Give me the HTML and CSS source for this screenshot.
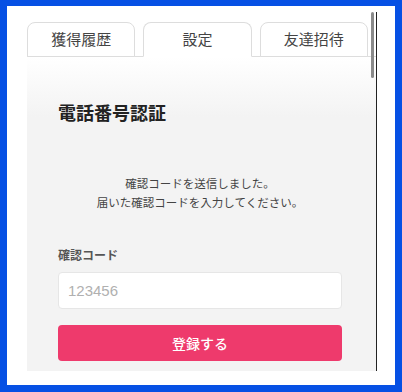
FILE: index.html
```html
<!DOCTYPE html>
<html lang="ja">
<head>
<meta charset="utf-8">
<link rel="stylesheet" href="styles.css">
</head>
<body>
<div class="frame">
  <div class="screen">
    <div class="tabs">
      <div class="tab">獲得履歴</div>
      <div class="tab active">設定</div>
      <div class="tab">友達招待</div>
    </div>
    <div class="content">
      <h1 class="title">電話番号認証</h1>
      <p class="message">確認コードを送信しました。<br>届いた確認コードを入力してください。</p>
      <label class="label" for="code">確認コード</label>
      <input class="input" id="code" type="text" placeholder="123456">
      <button class="submit" type="button">登録する</button>
    </div>
    <div class="scrollbar"></div>
  </div>
</div>
</body>
</html>
```

FILE: styles.css
```css
* { box-sizing: border-box; }
html, body { margin: 0; padding: 0; }
body {
  background: #0650e4;
  width: 402px;
  height: 392px;
  padding: 6px 7px 7px 7px;
  font-family: "Liberation Sans", "Noto Sans CJK JP", sans-serif;
  color: #333;
}
.frame {
  background: #fff;
  width: 388px;
  height: 379px;
  padding: 6px 18px 0 20px;
}
.screen {
  position: relative;
  width: 350px;
  height: 359px;
  border-right: 1px solid #222;
  display: flex;
  flex-direction: column;
}
.tabs {
  display: flex;
  gap: 8px;
  padding: 10px 8px 0 0;
  border-bottom: 1px solid #ddd;
  height: 45px;
  background: #fff;
}
.tab {
  flex: 1;
  height: 35px;
  margin-bottom: -1px;
  border: 1px solid #ddd;
  border-radius: 8px 8px 0 0;
  background: #fff;
  display: flex;
  align-items: center;
  justify-content: center;
  font-size: 15px;
  color: #444;
  padding-bottom: 2px;
}
.tab.active {
  border-bottom-color: #fff;
}
.content {
  flex: 1;
  background: linear-gradient(#ffffff 0px, #f3f3f3 60px, #f3f3f3 100%);
  padding: 45px 34px 0 31px;
  display: flex;
  flex-direction: column;
}
.title {
  margin: 0;
  font-size: 18px;
  line-height: 24px;
  font-weight: bold;
  color: #222;
}
.message {
  margin: 49px 0 0 0;
  font-size: 11.5px;
  line-height: 19px;
  text-align: center;
  color: #444;
}
.label {
  margin-top: 35px;
  font-size: 12px;
  line-height: 16px;
  font-weight: bold;
  color: #555;
}
.input {
  margin-top: 8px;
  height: 37px;
  width: 100%;
  border: 1px solid #e6e6e6;
  border-radius: 4px;
  background: #fff;
  padding: 0 9px;
  font-family: "Liberation Sans", "Noto Sans CJK JP", sans-serif;
  font-size: 15px;
  color: #333;
  outline: none;
}
.input::placeholder { color: #b0b0b0; }
.submit {
  margin-top: 16px;
  height: 36px;
  width: 100%;
  border: none;
  border-radius: 4px;
  background: #ee3a6c;
  color: #fff;
  font-family: "Liberation Sans", "Noto Sans CJK JP", sans-serif;
  font-size: 14px;
  font-weight: 500;
}
.scrollbar {
  position: absolute;
  top: 0;
  right: 2px;
  width: 3px;
  height: 66px;
  background: #8a8a8a;
  border-radius: 2px;
}
```
